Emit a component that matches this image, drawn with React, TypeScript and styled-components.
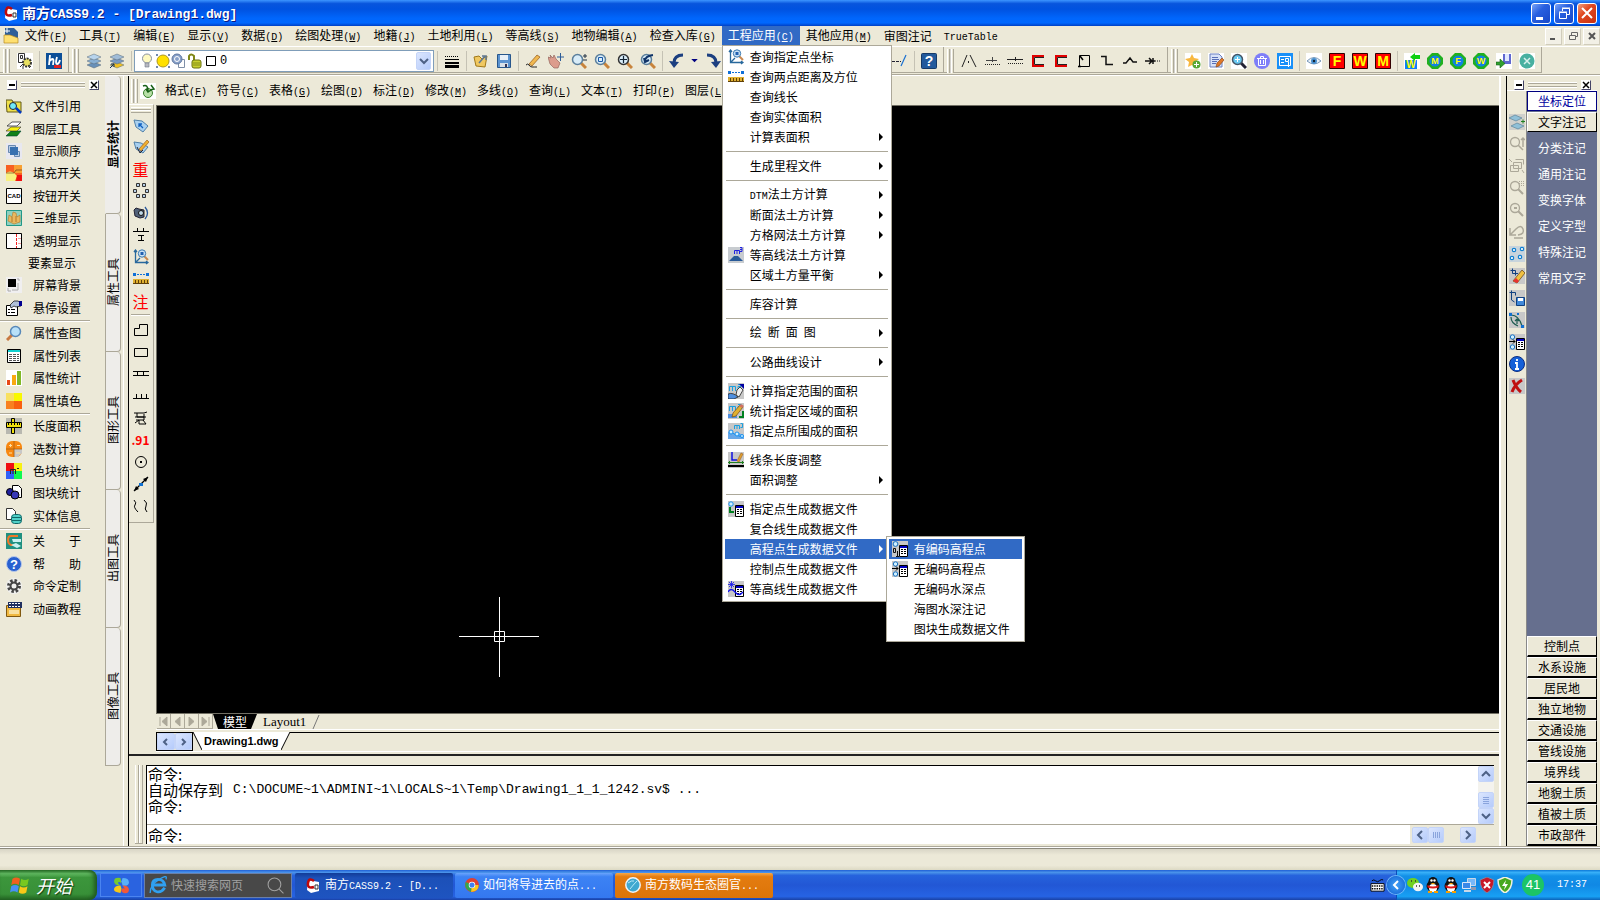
import React from 'react';
import styled, { createGlobalStyle, css } from 'styled-components';

const FACE = '#ece9d8';
const SHADOW = '#aca899';
const SELECT = '#316ac5';
const NAVY = '#000080';
const CJK = `'Noto Sans CJK SC', sans-serif`;
const MONO = `'Liberation Mono', 'Noto Sans CJK SC', monospace`;

const mag = (lens = '#b9dcf5', ring = '#5b7f9c', handle = '#c8843c') => (
  <>
    <path d="M10 10l5 5" stroke={handle} strokeWidth="3" />
    <circle cx="6.5" cy="6.5" r="5" fill={lens} stroke={ring} strokeWidth="1.5" />
  </>
);

const grid = (
  <>
    <path d="M7.5 4.5h8v11h-8z" fill="#fff" stroke="#000" />
    <path d="M8 5h7v2H8z" fill="#0000c0" />
    <path d="M9 8.5h2M12 8.5h2M9 10.5h2M12 10.5h2M9 12.5h2M12 12.5h2" stroke="#000" />
  </>
);

const square2 = (
  <path d="M1.5 8V3.5h6V8M4.5 4v4M10 1.5h3v2h-3v2h4" fill="none" stroke="#1aa0e0" />
);

const pencil = (
  <>
    <path d="M4 14l1-4 7-8 3 2-7 9z" fill="#e0b030" stroke="#7a4a10" strokeWidth=".7" />
    <path d="M11 3l2-2 3 2-2 2z" fill="#d07060" />
  </>
);

const badge = (letter: string) => (
  <>
    <path d="M5 0h6l5 5v6l-5 5H5l-5-5V5z" fill="#20b020" />
    <circle cx="8" cy="8" r="5.5" fill="#1080e8" />
    <text x="8" y="11" fontSize="9" fontWeight="700" fill="#ff0" textAnchor="middle">{letter}</text>
  </>
);

const redBox = (letter: string) => (
  <>
    <path d="M.5.5h15v15H.5z" fill="#f00" stroke="#300" />
    <text x="8" y="13" fontSize="14" fontWeight="700" fill="#ff0" textAnchor="middle">{letter}</text>
  </>
);

const penguin = (
  <>
    <ellipse cx="8" cy="9" rx="6.5" ry="6" fill="#111" />
    <circle cx="8" cy="4.5" r="4.5" fill="#111" />
    <ellipse cx="8" cy="11" rx="4" ry="4" fill="#fff" />
    <path d="M2.5 8q5.5 3 11 0v2.5q-5.5 2-11 0z" fill="#e01818" />
    <circle cx="6.5" cy="3.5" r="1.2" fill="#fff" />
    <circle cx="9.5" cy="3.5" r="1.2" fill="#fff" />
    <path d="M5.5 6h5L8 7.5z" fill="#f8a000" />
    <path d="M3 15h4M9 15h4" stroke="#f8a000" strokeWidth="2" />
  </>
);

const layerStack = (a: string, b: string, c: string) => (
  <>
    <path d="M1 12l7-3 7 3-7 3z" fill={c} stroke="#567" strokeWidth=".5" />
    <path d="M1 8l7-3 7 3-7 3z" fill={b} stroke="#567" strokeWidth=".5" />
    <path d="M1 4l7-3 7 3-7 3z" fill={a} stroke="#567" strokeWidth=".5" />
  </>
);

const glyphs: Record<string, React.ReactNode> = {
  cass: (
    <>
      <path d="M3 3l11 2v9l-8 2-4-3z" fill="#fff" />
      <path d="M9 4Q4 0 3 6t6 4" fill="none" stroke="#c00808" strokeWidth="2.5" />
      <path d="M10 8h3v4h-3z" fill="none" stroke="#333" />
    </>
  ),
  dwg: (
    <>
      <path d="M2 0h9l4 4v10H2z" fill="#2f5f98" />
      <path d="M1 7h6l8 3v5H1z" fill="#ffe070" stroke="#b88a20" strokeWidth=".7" />
      <path d="M4 0v5M1 3h6" stroke="#fff" />
    </>
  ),
  draft: (
    <>
      <path d="M0 0h16v16H0z" fill="#fff" />
      <path d="M1.5.5h6v9h-6zM3.5 2.5h2v3h-2z" fill="none" stroke="#333" />
      <circle cx="10" cy="9.500" r="4" fill="#e8e060" stroke="#333" strokeWidth="2" strokeDasharray="2 1" />
      <path d="M3 14l3-3M12 15l2-2M6 13v3" stroke="#333" />
    </>
  ),
  hb: (
    <>
      <path d="M0 0h16v16H0z" fill="#0c4f98" />
      <path d="M4 2L3 12M3.500 8q4-4 4 0L7 12M11 4q-2 7 0 7t3-4" fill="none" stroke="#fff" strokeWidth="1.8" />
      <path d="M8 12h7v3H8z" fill="#e02020" />
    </>
  ),
  layersBlue: layerStack('#b8d4ec', '#88b0d4', '#6890b8'),
  layersGold: (
    <>
      {layerStack('#a0bcd8', '#7898c0', '#f0c020')}
      <path d="M1 15l4-4M2 11h3v3" stroke="#103060" fill="none" />
    </>
  ),
  bulb: (
    <>
      <circle cx="8" cy="5.5" r="4.5" fill="#fffac0" stroke="#8890a0" />
      <path d="M6 10h4v4H6z" fill="#b8b8c0" stroke="#707888" strokeWidth=".6" />
    </>
  ),
  sun: (
    <>
      <path d="M1 1h2v2H1zM13 1h2v2h-2zM1 13h2v2H1zM13 13h2v2h-2z" fill="#7088b0" />
      <circle cx="8" cy="8" r="6" fill="#ffe000" stroke="#b09820" />
    </>
  ),
  freeze: (
    <>
      <path d="M7.5 6.5h6v8h-6z" fill="#fff" stroke="#8090a8" />
      <circle cx="6" cy="6" r="5" fill="#88a0c8" stroke="#6078a0" />
      <circle cx="6" cy="6" r="2.5" fill="none" stroke="#fff" />
    </>
  ),
  lock: (
    <>
      <path d="M2 7V3q2-3 5 0v5" fill="none" stroke="#808818" strokeWidth="2" />
      <rect x="5" y="7" width="9" height="8" rx="2" fill="#c8d030" stroke="#687010" />
      <path d="M6 10h7M6 12h7" stroke="#687010" strokeWidth=".7" />
    </>
  ),
  swatch: <path d="M3.5 3.5h9v9h-9z" fill="#fff" stroke="#000" />,
  lines: (
    <>
      <path d="M1 3.5h14" stroke="#000" strokeDasharray="1 1" />
      <path d="M1 6.5h14" stroke="#000" />
      <path d="M1 10h14" stroke="#000" strokeWidth="2" />
      <path d="M1 13.5h14" stroke="#000" strokeWidth="3" />
    </>
  ),
  folder: (
    <>
      <path d="M1 4l5-1 3 3 5-3-2 11-9-1z" fill="#f0c860" stroke="#a07818" />
      <path d="M6 10l6-7M9 3h4v4" stroke="#607890" strokeWidth="1.5" fill="none" />
    </>
  ),
  save: (
    <>
      <path d="M1.5 1.5h13v13h-13z" fill="#5b93d0" stroke="#28578c" />
      <path d="M4 2h8v5H4z" fill="#e8f0f8" />
      <path d="M4 10h8v4H4z" fill="#d8e0e8" />
      <path d="M9 11h2v3H9z" fill="#335" />
    </>
  ),
  pen: (
    <>
      <path d="M4 11l8-9 3 2-8 9z" fill="#f0b850" stroke="#905818" strokeWidth=".7" />
      <path d="M1 12q2-2 3 0t3 2 5 0" stroke="#222" fill="none" />
    </>
  ),
  hand: (
    <>
      <path d="M0 4l3 1-1-3 3 3 1-3 2 4 4 4-2 5H6l-4-4z" fill="#dc9c8c" stroke="#885850" strokeWidth=".6" />
      <path d="M12.5 0v8M9 4h7" stroke="#2c5c98" />
    </>
  ),
  zoomPm: <>{mag('#d8ecf8')}<path d="M12 3h4M14 1v4M12 7h4" stroke="#234" /></>,
  zoomWin: <>{mag('#d8ecf8')}<path d="M4.5 4.5h4v4h-4z" fill="none" stroke="#1858a8" /></>,
  zoomExt: <>{mag('#d8ecf8', '#333')}<path d="M3 6.5h7M6.5 3v7" stroke="#123" strokeWidth="1.2" /></>,
  zoomPrev: <>{mag('#d8ecf8')}<path d="M5 8q0-5 8-6M4 5l1 4 4-2" stroke="#103468" strokeWidth="2" fill="none" /></>,
  undo: (
    <>
      <path d="M14 2Q5 2 5 10" fill="none" stroke="#1c3f80" strokeWidth="3" />
      <path d="M0 8l5 7 5-6z" fill="#1c3f80" />
    </>
  ),
  redo: (
    <>
      <path d="M2 2q9 0 9 8" fill="none" stroke="#1c3f80" strokeWidth="3" />
      <path d="M6 9l5 6 5-7z" fill="#1c3f80" />
    </>
  ),
  tri: <path d="M4 6h8l-4 4z" fill={NAVY} />,
  dashLine: (
    <>
      <path d="M0 8.5h9" stroke="#223" strokeDasharray="3 1" />
      <path d="M9 13l5-11" stroke="#1870d0" strokeWidth="1.2" />
    </>
  ),
  helpBox: (
    <>
      <rect x=".5" y=".5" width="15" height="15" rx="1" fill="#235a9c" stroke="#163a68" />
      <text x="8" y="13" fontSize="14" fontWeight="700" fill="#fff" textAnchor="middle">?</text>
    </>
  ),
  slope: <path d="M1 14L6 2M9 2l6 12M7.500 8v2" stroke="#222" fill="none" />,
  dots1: <><path d="M1 11.5h15" stroke="#222" strokeDasharray="1 1" /><path d="M2 7.5h11M8.5 4v5" stroke="#444" /></>,
  dots2: <><path d="M1 10.5h15" stroke="#222" strokeDasharray="1 1" /><path d="M0 6.5h16M8.5 4v4" stroke="#222" /></>,
  redC1: <><path d="M14 3H3v10h11" stroke="#e00000" strokeWidth="2" fill="none" /><path d="M14 4.5H4.500v7H14" stroke="#222" fill="none" /></>,
  redC2: <><path d="M14 3H3v10h11" stroke="#e00000" strokeWidth="2" fill="none" /><path d="M14 4.5H4.500v7H14" stroke="#222" fill="none" /></>,
  notch: <><path d="M3.5 2.5h10v11h-10z" stroke="#000" fill="none" /><path d="M4 3l3 4M2 13.500h3" stroke="#000" strokeWidth="1.5" /></>,
  step: <path d="M2 3.500h5v8h7" stroke="#111" strokeWidth="1.5" fill="none" />,
  peak: <path d="M1 10h3l4-5 3 4h4" stroke="#111" strokeWidth="1.4" fill="none" />,
  arrowDots: <><path d="M0 8h10M4 5l3 3-3 3M8 5v6" stroke="#111" strokeWidth="1.5" fill="none" /><path d="M10 8h6" stroke="#111" strokeDasharray="1 1" /></>,
  star: (
    <>
      <path d="M0 0h16v16H0z" fill="#fff" />
      <path d="M7 1l2 4 5 1-4 3 1 5-4-2-4 2 1-5-4-3 5-1z" fill="#f8b840" />
      <circle cx="11.500" cy="11.500" r="4" fill="#58a838" />
      <path d="M9 11.5h5M11.5 9v5" stroke="#fff" />
    </>
  ),
  note: (
    <>
      <path d="M0 0h16v16H0z" fill="#fff" />
      <path d="M2 1h9l3 3v10H2z" fill="#d8e2f8" stroke="#6a80c0" />
      <path d="M4 4.500h6M4 6.500h7M4 8.500h5M4 10.500h4" stroke="#5870b8" />
      <path d="M8 14l1-4 5-5 2 2-5 6z" fill="#e07828" stroke="#804010" strokeWidth=".6" />
    </>
  ),
  magPlus: <><path d="M0 0h16v16H0z" fill="#fff" />{mag('#68c8f0', '#456', '#223')}<path d="M4 6.5h5M6.5 4v5" stroke="#fff" /></>,
  trash: (
    <>
      <circle cx="8" cy="8" r="8" fill="#7e7ef8" />
      <path d="M3 5.500h10M6.500 5V3.500h3V5M4.500 6v6.500h7V6M6.500 7v4M9.500 7v4" fill="none" stroke="#fff" />
    </>
  ),
  form: (
    <>
      <path d="M0 0h16v16H0z" fill="#1890f8" />
      <path d="M2.5 3.5h11v9h-11zM4 6.500h3M4 9.500h3M8.500 5.500h3v3h-3zM11.500 9v5" fill="none" stroke="#fff" />
    </>
  ),
  eye: (
    <>
      <path d="M0 0h16v16H0z" fill="#fff" />
      <path d="M1 8q7-7 14 0-7 6-14 0z" fill="#e8f0f8" stroke="#7898b8" />
      <circle cx="8" cy="8" r="3" fill="#4890d0" />
      <circle cx="8" cy="8" r="1.2" fill="#123" />
    </>
  ),
  boxF: redBox('F'),
  boxW: redBox('W'),
  boxM: redBox('M'),
  wArrow: (
    <>
      <path d="M0 0h16v16H0z" fill="#fff" />
      <path d="M1 7h12v9H1z" fill="#1080f8" />
      <path d="M6 4l5-4v2h5v4h-5v2z" fill="#10d010" />
      <text x="7" y="15" fontSize="10" fontWeight="700" fill="#ff0" textAnchor="middle">W</text>
    </>
  ),
  badgeM: badge('M'),
  badgeF: badge('F'),
  badgeW: badge('W'),
  exportDoc: (
    <>
      <path d="M0 0h16v16H0z" fill="#fff" />
      <path d="M7 1h8v10H7z" fill="#6068d0" />
      <path d="M9 1h4v7H9z" fill="#e0e8ff" />
      <path d="M0 9h4V6l5 4.500L4 15v-3H0z" fill="#30a030" stroke="#186018" strokeWidth=".6" />
    </>
  ),
  toolsRound: <><path d="M0 0h16v16H0z" fill="#fff" /><circle cx="8" cy="8" r="7.500" fill="#48b0a0" /><path d="M5 5l6 6M11 5l-6 6" stroke="#d8f0ec" strokeWidth="1.5" /></>,
  refresh: (
    <>
      <path d="M0 0h16v16H0z" fill="#fff" />
      <circle cx="8" cy="10" r="4.5" fill="#b8e0a8" stroke="#38802c" />
      <path d="M3 3q5-2 5 5M6 6l2 3 3-2M11 2l3 4-4 1" fill="none" stroke="#186018" strokeWidth="1.5" />
    </>
  ),
  fileRef: (
    <>
      <path d="M0 2h6l1 2h8v10H1z" fill="#f0e048" stroke="#605818" />
      <circle cx="7" cy="8" r="3.5" fill="#70e8f8" stroke="#223" />
      <path d="M10 10l5 5" stroke="#0038c0" strokeWidth="2.5" />
    </>
  ),
  layers: (
    <>
      <path d="M0 15l5-5h10l-4 5z" fill="#108018" stroke="#043" strokeWidth=".6" />
      <path d="M0 10l5-4h10l-4 4z" fill="#f8f010" stroke="#333" strokeWidth=".6" />
      <path d="M1 5l5-4h9l-4 4z" fill="#fff" stroke="#333" strokeWidth=".8" />
    </>
  ),
  order: (
    <>
      <path d="M0 0h16v16H0z" fill="#e8e8f0" />
      <path d="M2.500 2.500h7v7h-7zM8.500 8.500h5v5h-5z" fill="#b8cce4" stroke="#6888b0" />
      <path d="M4 4h8v8H4z" fill="#3870b0" />
    </>
  ),
  fill: (
    <>
      <path d="M0 0h16v16H0z" fill="#f86020" />
      <path d="M8 0h8v8H8z" fill="#f8a030" />
      <path d="M0 8q4-3 8 0l3 3-2 5H0z" fill="#f8f080" />
      <path d="M11 10h5v6h-6z" fill="#f01010" />
      <path d="M0 8h8l2-3h6" stroke="#603010" fill="none" strokeWidth=".6" />
    </>
  ),
  cad: (
    <>
      <path d="M.5.5h15v15H.5z" fill="#fff" stroke="#000" />
      <text x="8" y="10" fontSize="6" fontWeight="700" fill="#000" textAnchor="middle">CAD</text>
    </>
  ),
  threeD: (
    <>
      <path d="M.5.5h15v15H.5z" fill="#90d0c0" stroke="#209888" />
      <path d="M2 11l1-6 3 2 1-5 3 1 1 4 3-2v7l-6 2z" fill="#e8b860" stroke="#b07828" strokeWidth=".6" />
      <path d="M6 7v5M10 6v6" stroke="#b07828" />
    </>
  ),
  transp: (
    <>
      <path d="M.5.5h15v15H.5z" fill="#fff" stroke="#000" />
      <path d="M10.5 1v14" stroke="#f02020" strokeDasharray="3 1" />
      <path d="M12 5.500h3M12 10.500h3" stroke="#f8a0a0" />
    </>
  ),
  screenBg: (
    <>
      <path d="M0 0h16v16H0z" fill="#f0eff0" />
      <path d="M2 2h8v8H2z" fill="#000" />
      <path d="M11 2h2v2M2 11v3h3M12 6v7H6" stroke="#aaa" fill="none" />
    </>
  ),
  hover: (
    <>
      <path d="M.5 5.5h11v10H.5z" fill="#fff" stroke="#000" />
      <path d="M2 9.500h2M5 9.500h4M2 12.500h2M5 12.500h4" stroke="#000" />
      <path d="M4 5l4-4h4l3 2v3l-5 1-2-1-3 2z" fill="#b0c0d8" stroke="#000" strokeWidth=".7" />
      <path d="M13 1h3v5h-3z" fill="#000090" />
    </>
  ),
  magLeft: <g transform="matrix(-1 0 0 1 16 0)">{mag('#b8e0f8', '#5888b8', '#c87840')}</g>,
  list: (
    <>
      <path d="M1.5 1.5h13v13h-13z" fill="#fff" stroke="#000" />
      <path d="M2 2h12v2H2z" fill="#10d0d0" />
      <path d="M3 6.5h3M7 6.5h3M11 6.5h2M3 8.5h3M7 8.5h3M11 8.5h2M3 10.5h3M7 10.5h3M11 10.5h2M3 12.5h3M7 12.5h3M11 12.5h2" stroke="#555" />
    </>
  ),
  bars: (
    <>
      <path d="M0 0h16v16H0z" fill="#fff" />
      <path d="M1 10h3v5H1z" fill="#e84818" />
      <path d="M6 5h4v10H6z" fill="#f8a810" />
      <path d="M11 1h4v14h-4z" fill="#80b828" />
    </>
  ),
  color4: (
    <>
      <path d="M0 0h8v8H0z" fill="#f8e060" />
      <path d="M8 0h8v8H8z" fill="#f8f800" />
      <path d="M0 8h8v8H0z" fill="#f88020" />
      <path d="M8 8h8v8H8z" fill="#f86010" />
    </>
  ),
  ruler: (
    <>
      <path d="M0 0h16v16H0z" fill="#b8b8b0" />
      <path d="M5.500.5h3v15h-3z" fill="#f0e010" stroke="#000" />
      <path d="M.5 4.500h15v5H.5z" fill="#f0e010" stroke="#000" />
      <path d="M2.500 5v2M5.500 5v2M8.500 5v2M11.500 5v2M13.500 5v2" stroke="#000" />
    </>
  ),
  calc: (
    <>
      <rect x="0" y="0" width="16" height="16" rx="6" fill="#f88810" />
      <path d="M8 8h8v4l-4 4H8z" fill="#c8c8c8" />
      <path d="M8 0v16M0 8h16" stroke="#a86010" strokeWidth=".8" />
      <path d="M3 4.5h3M4.5 3v3M11 4.500h3M3 12h3M10 12h4" stroke="#fce0a0" />
    </>
  ),
  blocks: (
    <>
      <path d="M0 0h8v8H0z" fill="#f01010" />
      <path d="M8 0h8v8H8z" fill="#f8f010" />
      <path d="M0 8h8v8H0z" fill="#3060f8" />
      <path d="M8 8h8v8H8z" fill="#10f850" />
      <path d="M4.500 11V6.500h5V11M7 7v4M11 5.500h2" fill="none" stroke="#222" />
    </>
  ),
  plots: (
    <>
      <path d="M6.5.5h6l3 3v9h-9z" fill="#fff" stroke="#000" />
      <circle cx="4" cy="7" r="3.5" fill="#2020a0" stroke="#000" />
      <circle cx="9" cy="10" r="4" fill="#3838b8" stroke="#000" />
    </>
  ),
  entity: (
    <>
      <path d="M.5.5h6l3 3v8h-9z" fill="#fff" stroke="#333" />
      <rect x="5.500" y="6.500" width="10" height="9" rx="3" fill="#50d0c8" stroke="#106868" />
      <path d="M6 9.500h9M6 12.500h9" stroke="#106868" />
    </>
  ),
  about: (
    <>
      <path d="M0 0h16v16H0z" fill="#209080" />
      <path d="M12 3H5Q2 3 2 7t3 5h4" fill="none" stroke="#f07828" strokeWidth="2" />
      <path d="M6 6h9v3H7zM5 12l5-2 5 3-4 2z" fill="#c8f0f0" />
    </>
  ),
  helpRound: (
    <>
      <circle cx="8" cy="8" r="7.5" fill="#2860d0" stroke="#b8c8e8" />
      <text x="8" y="13" fontSize="13" fontWeight="700" fill="#fff" textAnchor="middle">?</text>
    </>
  ),
  gear: (
    <>
      <circle cx="8" cy="8" r="8" fill="#f0f0ee" />
      <circle cx="8" cy="8" r="5" fill="none" stroke="#444" strokeWidth="4" strokeDasharray="2.2 1.7" />
      <circle cx="8" cy="8" r="3.5" fill="none" stroke="#444" strokeWidth="2" />
    </>
  ),
  film: (
    <>
      <path d="M.5 4.500h14v11H.5z" fill="#f0b840" stroke="#805810" />
      <path d="M2 1h14v6H2z" fill="#203060" />
      <path d="M3 2.5h12M3 5.500h12" stroke="#fff" strokeDasharray="2 1" />
      <path d="M3 9h10v4H3z" fill="#f8e0a0" />
    </>
  ),
  tag: (
    <>
      <path d="M1 3l8 1 6 5-5 6-7-5z" fill="#a8d0f0" stroke="#5080a8" />
      <path d="M6 7l4 4M6 10V7h3" stroke="#1060c0" fill="none" strokeWidth="1.3" />
    </>
  ),
  tagEdit: (
    <>
      <path d="M1 3l7 1 7 4-5 6-7-4z" fill="#a8d0f0" stroke="#5080a8" />
      <path d="M6 10l8-9 2 2-8 9z" fill="#f0b030" stroke="#905010" strokeWidth=".6" />
      <path d="M4 8l3 6 3-3" stroke="#223" fill="none" />
    </>
  ),
  squares: (
    <path
      d="M3.500.500h3v3h-3zM9.500.500h3v3h-3zM.500 6.500h3v3h-3zM12.500 6.500h3v3h-3zM3.500 11.500h3v3h-3zM9.500 11.500h3v3h-3z"
      fill="#b8d0e8"
      stroke="#333"
    />
  ),
  camera: (
    <>
      <path d="M1 5l2-2 3 1 5 1v7L7 13l-5-2z" fill="#506078" stroke="#223" />
      <circle cx="8" cy="8" r="2.5" fill="#c0d8e8" stroke="#111" />
      <path d="M12 2q5 6 0 12" stroke="#28589c" fill="none" strokeWidth="1.3" />
    </>
  ),
  joint: <path d="M0 4.5h16M4.5 1v3M10.5 1v3M5 8.5h6M5 13.5h6M8.500 9v5" stroke="#000" fill="none" />,
  coordQuery: (
    <>
      <path d="M2.5 1v12.5H15M1 3l1.5-2L4 3M13 12l2 1.5-2 1.5M3 13l4-4" stroke="#28689c" strokeWidth="1.3" fill="none" />
      <path d="M11 7l4 4" stroke="#c88850" strokeWidth="2" />
      <circle cx="9" cy="4.5" r="3.7" fill="#c8e0f4" stroke="#3878b0" />
      <path d="M7.5 3h3v3h-3z" fill="#2060b0" />
    </>
  ),
  distance: (
    <>
      <path d="M0 2h3v3H0zM13 2h3v3h-3z" fill="#1070d8" />
      <path d="M4 3.5h9" stroke="#1070d8" strokeDasharray="2 1" />
      <path d="M0 8h16v5H0z" fill="#e0b030" />
      <path d="M0 12.500h16M2.5 9v3M5.5 9v3M8.5 9v3M11.5 9v3M14.5 9v3" stroke="#604008" />
    </>
  ),
  polygon: <path d="M1.5 6.5h5v-4h8v11h-13z" fill="none" stroke="#000" />,
  rect: <path d="M1.5 4.5h13v8h-13z" fill="none" stroke="#000" />,
  ladder: <path d="M0 5.5h16M0 9.5h16M4.5 5v4M10.5 5v4" stroke="#000" fill="none" />,
  comb: <path d="M0 10.5h16M3.5 6v4M8.5 6v4M13.5 6v4" stroke="#000" fill="none" />,
  brush: <path d="M1 3h10l3-1M4 3v4h7V4M2 7h11M3 10h8V7M2 13l4-3M10 10l3 4M6 10v4h7" stroke="#000" fill="none" />,
  circleDot: <><circle cx="8" cy="8" r="5.5" fill="none" stroke="#000" /><path d="M7 7h2v2H7z" /></>,
  arrow2: <><path d="M1 15L15 1" stroke="#000" strokeWidth="1.2" /><path d="M15 1l-2 5-3-3zM1 15l2-5 3 3z" /><path d="M6 7h4v3H6z" fill="#1070d0" /></>,
  waves: <path d="M1 2q3 3 1 5t3 7M11 2q4 3 2 6t1 6" stroke="#000" fill="none" />,
  volume: (
    <>
      <path d="M0 0h16v16H0z" fill="#c8ccd0" />
      <path d="M6.500 7V3.500h5V7M9 4v3M12 .5h2v4h-2M12 2.500h2" stroke="#2020e0" fill="none" />
      <path d="M1 14l5-5h4l5 5z" fill="#285a98" />
    </>
  ),
  area1: (
    <>
      <path d="M0 0h16v16H0z" fill="#c8c8c8" />
      {square2}
      <path d="M0 11q5-2 10 3l-4 2H0z" fill="#5090e0" stroke="#111" strokeWidth=".7" />
      <path d="M8 12l1-5 3-3 3 3-4 7z" fill="#f0f0f0" stroke="#222" strokeWidth=".8" />
      <path d="M11 1h5v5z" fill="#0000a0" />
    </>
  ),
  area2: (
    <>
      <path d="M0 0h16v16H0z" fill="#c8c8c8" />
      {square2}
      <path d="M0 11h9v4H0z" fill="#5090e0" />
      {pencil}
      <path d="M15 8v6h-4" stroke="#008020" strokeWidth="2" fill="none" />
    </>
  ),
  area3: (
    <>
      <path d="M0 0h16v16H0z" fill="#c8c8c8" />
      <path d="M6.500 6V2.500h5V6M9 3v3M12.500.5h2v4h-2" fill="none" stroke="#1aa0e0" />
      <path d="M0 9l6 2 5-1 5 3v3H0z" fill="#68a8e8" />
      <path d="M3 9l5 3 6 2" stroke="#1890f0" fill="none" />
      <circle cx="3" cy="9" r="2" fill="#d0f0ff" stroke="#1890f0" />
      <circle cx="9" cy="11" r="2" fill="#d0f0ff" stroke="#1890f0" />
      <circle cx="14" cy="13" r="1.500" fill="#d0f0ff" stroke="#1890f0" />
    </>
  ),
  lineLen: (
    <>
      <path d="M0 0h16v16H0z" fill="#c8c8c8" />
      <path d="M4 0v8h5" stroke="#1010e0" strokeWidth="1.5" fill="none" />
      <path d="M9 9l4-8 2 1-4 8z" fill="#e0a030" stroke="#905010" strokeWidth=".5" />
      <path d="M0 10.5h16M2 9L.5 10.500 2 12M14 9l1.500 1.500L14 12" stroke="#208020" fill="none" />
      <path d="M0 13h16v2H0z" fill="#000" />
    </>
  ),
  ptData: (
    <>
      <path d="M0 0h16v16H0z" fill="#c8c8c8" />
      <circle cx="3" cy="3" r="2.2" fill="#d0f0ff" stroke="#1890f0" />
      <path d="M2 6v5h4" stroke="#008020" strokeWidth="2" fill="none" />
      {grid}
    </>
  ),
  contour: (
    <>
      <path d="M0 0h16v16H0z" fill="#c8c8c8" />
      {grid}
      <path d="M3.500 0v7M0 3.5h7M1 1l5 5M6 1L1 6" stroke="#1010f0" strokeWidth=".8" />
      <path d="M0 11q3-5 7 0t8 0" fill="none" stroke="#1010f0" strokeWidth="1.3" />
    </>
  ),
  code1: (
    <>
      <path d="M0 0h16v16H0z" fill="#c8c8c8" />
      <circle cx="3.5" cy="3" r="2.4" fill="#d0f0ff" stroke="#1870c0" />
      <path d="M1.500 7.500h2v4h-2zM5.500 10v5M4 15.500h3" stroke="#111" fill="none" />
      {grid}
    </>
  ),
  code2: (
    <>
      <path d="M0 0h16v16H0z" fill="#c8c8c8" />
      <circle cx="3.5" cy="3" r="2.2" fill="#d0f0ff" stroke="#1870c0" />
      <circle cx="3.5" cy="13" r="2.2" fill="#d0f0ff" stroke="#1870c0" />
      <path d="M0 7.500h6M4 5.500l2 2-2 2" stroke="#000" fill="none" />
      {grid}
    </>
  ),
  layerPair: (
    <>
      <path d="M0 0h16v16H0z" fill="#d0d0cc" />
      <path d="M0 4l6-3 7 3-6 3zM2 12l6-3 7 3-6 3z" fill="#90c0d8" stroke="#507890" strokeWidth=".6" />
      <path d="M12 7.500h4M14 5.500v4" stroke="#208020" />
    </>
  ),
  gMag1: <><circle cx="6" cy="6" r="4.5" fill="none" stroke={SHADOW} strokeWidth="1.3" /><path d="M9 9l5 5M14 2v9M12 4l2-2 2 2" stroke={SHADOW} fill="none" strokeWidth="1.5" /></>,
  gDocs: <path d="M6.500 1.500h8v5M4.500 4.500h8v6h-8zM1.500 7.500h8v6h-8zM0 1l3 3M13 12l2 3" stroke={SHADOW} fill="none" />,
  gMag2: <><circle cx="6" cy="6" r="4.5" fill="none" stroke={SHADOW} strokeWidth="1.3" /><path d="M9 9l5 5" stroke={SHADOW} strokeWidth="2" /><path d="M10 1.500h6M10 3.500h6M10 5.500h6" stroke={SHADOW} strokeDasharray="1 1" /></>,
  gMag3: <><circle cx="6" cy="6" r="4.5" fill="none" stroke={SHADOW} strokeWidth="1.3" /><path d="M9 9l5 5M5 6h3" stroke={SHADOW} strokeWidth="2" /></>,
  gUndo: <path d="M1 4v7h6M1 11l6-6q5-5 7 0t-5 6M5 14h9" stroke={SHADOW} fill="none" strokeWidth="1.5" />,
  points: (
    <>
      <path d="M0 0h16v16H0z" fill="#c8d4dc" />
      <g fill="#fff" stroke="#1080d0" strokeWidth="1.2">
        <circle cx="5" cy="4" r="1.7" /><circle cx="13" cy="3" r="1.7" />
        <circle cx="3" cy="12" r="1.7" /><circle cx="11" cy="11" r="1.7" />
      </g>
    </>
  ),
  eraser: (
    <>
      <path d="M0 0h16v16H0z" fill="#c8c8c8" />
      <path d="M1.500 2.500h5v5M3.500.500v5H9" stroke="#104080" fill="none" />
      <path d="M4 13L13 2l3 3-8 10z" fill="#f0c040" stroke="#604010" strokeWidth=".7" />
      <path d="M4 13l3-3 3 3-2 2z" fill="#e83030" />
    </>
  ),
  saveTo: (
    <>
      <path d="M0 0h16v16H0z" fill="#c8c8c8" />
      <path d="M.5 2.500h6v3M2.500.500V10l3 2" stroke="#104080" fill="none" />
      <path d="M7.500 7.500h8v8h-8z" fill="#4088d8" stroke="#104080" />
      <path d="M9 8h5v3H9z" fill="#fff" />
    </>
  ),
  curve: (
    <>
      <path d="M0 0h16v16H0z" fill="#c8c8c8" />
      <path d="M2 3q8 0 11 11M2 5q0 6 7 9M8 12V7M6 9l2-2 2 2" stroke="#1d5c50" fill="none" strokeWidth="1.2" />
      <path d="M0 1h3v3H0zM12 13h3v3h-3zM8 1h2v2H8z" fill="#1070d0" />
    </>
  ),
  info: (
    <>
      <circle cx="8" cy="8" r="7.5" fill="#1560d8" stroke="#0a2c80" />
      <path d="M8 3v2M6 7h2v6M6 13h4" stroke="#fff" strokeWidth="1.8" fill="none" />
    </>
  ),
  redX: (
    <>
      <path d="M0 0h16v16H0z" fill="#c8c8c8" />
      <path d="M4 2q3 8 8 12M13 2Q6 6 3 14" stroke="#c01010" strokeWidth="3" fill="none" />
    </>
  ),
  xpFlag: (
    <>
      <path d="M2 3q3-2 6 0L7 8Q4 6 1 8z" fill="#f06020" />
      <path d="M9 3q3 2 6 0l-1 5q-3 2-6 0z" fill="#78c820" />
      <path d="M1 9q3-2 6 0l-1 5q-3-2-6 0z" fill="#4890f8" />
      <path d="M8 9q3 2 6 0l-1 5q-3 2-6 0z" fill="#f8c818" />
    </>
  ),
  swirl: (
    <>
      <path d="M7 1Q1 0 1 4t6 4q-3-2-2-3t3 1z" fill="#78c830" />
      <path d="M9 1q6 0 6 4t-6 3l-1-4z" fill="#58b0f8" />
      <path d="M7 8q-5 0-6 3t6 4l1-4z" fill="#f8c818" />
      <path d="M9 8q6 0 6 4t-5 3q-3-1-2-3t3-1z" fill="#f05838" />
    </>
  ),
  ie: (
    <>
      <path d="M14 10.5Q11 15 7 14T3 8q0-5 5-5t6 5H4" fill="none" stroke="#30a0f0" strokeWidth="2.5" />
      <path d="M1 15Q1 8 9 3t6 0" fill="none" stroke="#30a0f0" strokeWidth="1.2" />
    </>
  ),
  search: <><circle cx="7" cy="7" r="6" fill="none" stroke="#a0a0a0" /><path d="M11.5 11.5l4 4" stroke="#a0a0a0" /></>,
  chrome: (
    <>
      <circle cx="8" cy="8" r="8" fill="#e04030" />
      <path d="M8 8L1 4.500Q-2 12 7 16z" fill="#30a850" />
      <path d="M8 8h7.500Q16 15 7 16z" fill="#f8c820" />
      <circle cx="8" cy="8" r="3.7" fill="#fff" />
      <circle cx="8" cy="8" r="2.9" fill="#4080f0" />
    </>
  ),
  globe: (
    <>
      <circle cx="8" cy="8" r="7.2" fill="#40a8d0" stroke="#f0f4f8" strokeWidth="1.5" />
      <path d="M5 12q3-4 7-8M3 6q4-3 6-2" stroke="#b8e8f8" fill="none" />
    </>
  ),
  keyboard: (
    <>
      <path d="M2 3q2-2 4 0t4 0 4-1" fill="none" stroke="#000" />
      <path d="M1 6h14v8H1z" fill="#fff" stroke="#000" />
      <path d="M2 8.5h12M2 11.5h12" stroke="#000" strokeWidth="1.5" strokeDasharray="1.5 1" />
    </>
  ),
  wechat: (
    <>
      <ellipse cx="6" cy="6" rx="6" ry="5" fill="#70d020" />
      <ellipse cx="11" cy="10" rx="5" ry="4.200" fill="#f4f4f4" />
      <path d="M4 4h1M8 4h1M9 9h1M12 9h1" stroke="#333" strokeWidth="1.5" />
    </>
  ),
  penguin,
  network: (
    <>
      <path d="M6.5 1.5h8v7h-8z" fill="#78b8f8" stroke="#c8d8e8" />
      <path d="M10 10h5v3h-5z" fill="#9098b0" />
      <path d="M1.5 5.5h8v6h-8z" fill="#3888e8" stroke="#d8e8f8" />
      <path d="M3 14h7" stroke="#c8d8e8" strokeWidth="2" />
    </>
  ),
  shieldRed: <><path d="M8 0l7 3q0 9-7 13Q1 12 1 3z" fill="#c81828" stroke="#7888a8" /><path d="M5 5l6 6M11 5l-6 6" stroke="#fff" strokeWidth="2" /></>,
  shieldGreen: <><path d="M8 0l7 3q0 9-7 13Q1 12 1 3z" fill="#48a820" stroke="#f0f0e0" strokeWidth="1.5" /><path d="M9 3L5 9h3l-1 4 4-6H8z" fill="#fff" /></>,
};

const Icon = ({ name, size = 16 }: { name: string; size?: number }) => (
  <Svg width={size} height={size} viewBox="0 0 16 16" aria-hidden="true">
    {glyphs[name]}
  </Svg>
);

// Latin runs sit on a half-width grid next to the full-width characters.
const Label = ({ text, hotkey }: { text: string; hotkey?: string }) => (
  <span>
    {text.split(/([\x20-\x7e]+)/).map((part, i) => (i % 2 ? <Latin key={i}>{part}</Latin> : part))}
    {hotkey && (
      <Latin>
        (<u>{hotkey}</u>)
      </Latin>
    )}
  </span>
);

const menuBar: [string, string?][] = [
  ['文件', 'F'], ['工具', 'T'], ['编辑', 'E'], ['显示', 'V'], ['数据', 'D'],
  ['绘图处理', 'W'], ['地籍', 'J'], ['土地利用', 'L'], ['等高线', 'S'],
  ['地物编辑', 'A'], ['检查入库', 'G'], ['工程应用', 'C'], ['其他应用', 'M'],
  ['审图注记'], ['TrueTable'],
];

const subBar: [string, string][] = [
  ['格式', 'F'], ['符号', 'C'], ['表格', 'G'], ['绘图', 'D'], ['标注', 'D'], ['修改', 'M'],
  ['多线', 'O'], ['查询', 'L'], ['文本', 'T'], ['打印', 'P'], ['图层', 'L'],
];

type Entry = { text: string; icon?: string; more?: boolean; open?: boolean };

const menuGroups: Entry[][] = [
  [
    { text: '查询指定点坐标', icon: 'coordQuery' },
    { text: '查询两点距离及方位', icon: 'distance' },
    { text: '查询线长' },
    { text: '查询实体面积' },
    { text: '计算表面积', more: true },
  ],
  [{ text: '生成里程文件', more: true }],
  [
    { text: 'DTM法土方计算', more: true },
    { text: '断面法土方计算', more: true },
    { text: '方格网法土方计算', more: true },
    { text: '等高线法土方计算', icon: 'volume' },
    { text: '区域土方量平衡', more: true },
  ],
  [{ text: '库容计算' }],
  [{ text: '绘 断 面 图', more: true }],
  [{ text: '公路曲线设计', more: true }],
  [
    { text: '计算指定范围的面积', icon: 'area1' },
    { text: '统计指定区域的面积', icon: 'area2' },
    { text: '指定点所围成的面积', icon: 'area3' },
  ],
  [
    { text: '线条长度调整', icon: 'lineLen' },
    { text: '面积调整', more: true },
  ],
  [
    { text: '指定点生成数据文件', icon: 'ptData' },
    { text: '复合线生成数据文件' },
    { text: '高程点生成数据文件', more: true, open: true },
    { text: '控制点生成数据文件' },
    { text: '等高线生成数据文件', icon: 'contour' },
  ],
];

const subMenu: Entry[] = [
  { text: '有编码高程点', icon: 'code1', open: true },
  { text: '无编码高程点', icon: 'code2' },
  { text: '无编码水深点' },
  { text: '海图水深注记' },
  { text: '图块生成数据文件' },
];

const sideGroups: { height: number; items: [string, string?][] }[] = [
  {
    height: 224,
    items: [
      ['文件引用', 'fileRef'], ['图层工具', 'layers'], ['显示顺序', 'order'], ['填充开关', 'fill'],
      ['按钮开关', 'cad'], ['三维显示', 'threeD'], ['透明显示', 'transp'], ['要素显示'],
      ['屏幕背景', 'screenBg'], ['悬停设置', 'hover'],
    ],
  },
  { height: 90, items: [['属性查图', 'magLeft'], ['属性列表', 'list'], ['属性统计', 'bars'], ['属性填色', 'color4']] },
  {
    height: 112,
    items: [['长度面积', 'ruler'], ['选数计算', 'calc'], ['色块统计', 'blocks'], ['图块统计', 'plots'], ['实体信息', 'entity']],
  },
  { height: 90, items: [['关　　于', 'about'], ['帮　　助', 'helpRound'], ['命令定制', 'gear'], ['动画教程', 'film']] },
];

const sideTabs = ['显示统计', '属性工具', '图形工具', '出图工具', '图像工具'];

const drawTools = ['tag', 'tagEdit', '重', 'squares', 'camera', 'joint', 'coordQuery', 'distance', '注', '|',
  'polygon', 'rect', 'ladder', 'comb', 'brush', '.91', 'circleDot', 'arrow2', 'waves'];

const dockTools = ['layerPair', 'gMag1', 'gDocs', 'gMag2', 'gMag3', 'gUndo', 'points', 'eraser', 'saveTo',
  'curve', 'code2', 'info', 'redX'];

const annotations = ['分类注记', '通用注记', '变换字体', '定义字型', '特殊注记', '常用文字'];
const categories = ['控制点', '水系设施', '居民地', '独立地物', '交通设施', '管线设施', '境界线', '地貌土质', '植被土质', '市政部件'];

const Tools = ({ names }: { names: string[] }) => (
  <>
    {names.map((name, i) =>
      name === '|' ? (
        <Divider key={i} />
      ) : (
        <ToolButton key={i} aria-label={name}>
          <Icon name={name} />
        </ToolButton>
      )
    )}
  </>
);

const MenuRow = ({ entry, children }: { entry: Entry; children?: React.ReactNode }) => (
  <MenuItem>
    <MenuButton $active={entry.open}>
      <IconSlot>{entry.icon && <Icon name={entry.icon} />}</IconSlot>
      <Label text={entry.text} />
      {entry.more && <More />}
    </MenuButton>
    {children}
  </MenuItem>
);

const EngineeringMenu = () => (
  <Popup>
    {menuGroups.map((group, i) => (
      <React.Fragment key={i}>
        {i > 0 && <MenuRule />}
        {group.map((entry) => (
          <MenuRow key={entry.text} entry={entry}>
            {entry.open && (
              <SubPopup>
                {subMenu.map((sub) => (
                  <MenuRow key={sub.text} entry={sub} />
                ))}
              </SubPopup>
            )}
          </MenuRow>
        ))}
      </React.Fragment>
    ))}
  </Popup>
);

const DockHeader = () => (
  <DockHead>
    <TinyButton aria-label="minimize">
      <svg width="8" height="8"><path d="M1 4h6" stroke="#000" strokeWidth="2" /></svg>
    </TinyButton>
    <DockGrip />
    <TinyButton aria-label="close">
      <svg width="8" height="8"><path d="M1 1l6 6M7 1L1 7" stroke="#000" strokeWidth="1.5" /></svg>
    </TinyButton>
  </DockHead>
);

const Chevron = ({ d, thin }: { d: string; thin?: boolean }) => (
  <svg width="10" height="10" viewBox="0 0 10 10">
    <path d={d} fill="none" stroke={thin ? '#8aa4dc' : '#4d6185'} strokeWidth={thin ? 1 : 2} />
  </svg>
);

const LeftDock = () => (
  <LeftPanel>
    <LeftMain>
      <DockHeader />
      {sideGroups.map((group, i) => (
        <SideGroup key={i} $height={group.height} $ruled={i > 0}>
          {group.items.map(([text, icon]) => (
            <SideButton key={text} $plain={!icon}>
              {icon && <Icon name={icon} />}
              {text}
            </SideButton>
          ))}
        </SideGroup>
      ))}
    </LeftMain>
    <SideTabs>
      {sideTabs.map((tab, i) => (
        <SideTab key={tab} $active={i === 0}>
          <span>{tab}</span>
        </SideTab>
      ))}
    </SideTabs>
  </LeftPanel>
);

const Workspace = () => (
  <Center>
    <SubBar>
      <Grip $tight />
      <Icon name="refresh" />
      <SubMenus>
        {subBar.map(([text, key]) => (
          <FlatButton key={text}>
            <Label text={text} hotkey={key} />
          </FlatButton>
        ))}
      </SubMenus>
    </SubBar>
    <Stage>
      <DrawBar>
        <FlatGrip />
        {drawTools.map((name) =>
          name === '|' ? (
            <DrawRule key={name} />
          ) : (
            <DrawButton key={name} aria-label={name}>
              {glyphs[name] ? <Icon name={name} /> : <RedText $small={name === '.91'}>{name}</RedText>}
            </DrawButton>
          )
        )}
      </DrawBar>
      <Sheets>
        <Canvas>
          <Crosshair width="80" height="80" viewBox="0 0 80 80">
            <path d="M0 39.5h80M40.5 0v80M35.5 34.5h10v10h-10z" fill="none" stroke="#fff" />
          </Crosshair>
        </Canvas>
        <LayoutTabs>
          {['M2 1v9M9 1v9L4 5.5z', 'M8 1v9L3 5.5z', 'M3 1v9l5-4.5z', 'M9 1v9M2 1v9l5-4.5z'].map((d) => (
            <NavButton key={d} aria-label="sheet">
              <svg width="11" height="11"><path d={d} fill={SHADOW} stroke={SHADOW} /></svg>
            </NavButton>
          ))}
          <LayoutTab $active>模型</LayoutTab>
          <LayoutTab>
            Layout1
            <svg width="8" height="14"><path d="M1 14L7 0" stroke="#777" /></svg>
          </LayoutTab>
        </LayoutTabs>
        <FileTabs>
          <FileNav>
            <ScrollButton aria-label="previous"><Chevron d="M6 2L3 5l3 3" /></ScrollButton>
            <ScrollButton aria-label="next"><Chevron d="M4 2l3 3-3 3" /></ScrollButton>
          </FileNav>
          <svg width="9" height="18"><path d="M0 0h9v18z" fill="#fff" /><path d="M0 0l9 18" stroke="#000" /></svg>
          <FileTab>Drawing1.dwg</FileTab>
          <svg width="9" height="18"><path d="M0 0h9L0 18z" fill="#fff" /><path d="M9 0L0 18" stroke="#000" /></svg>
          <FileLine />
        </FileTabs>
      </Sheets>
    </Stage>
    <CommandPane>
      <TallGrip />
      <CommandBox>
        <History>
          <HistoryText>
            <HistoryLine>命令:</HistoryLine>
            <HistoryLine>
              自动保存到
              <Path>{'C:\\DOCUME~1\\ADMINI~1\\LOCALS~1\\Temp\\Drawing1_1_1_1242.sv$ ...'}</Path>
            </HistoryLine>
            <HistoryLine>命令:</HistoryLine>
          </HistoryText>
          <VScroll>
            <ScrollButton aria-label="up"><Chevron d="M1 7l4-4 4 4" /></ScrollButton>
            <Spacer />
            <ScrollButton aria-label="thumb"><Chevron thin d="M2 2.5h6M2 4.5h6M2 6.5h6M2 8.5h6" /></ScrollButton>
            <ScrollButton aria-label="down"><Chevron d="M1 3l4 4 4-4" /></ScrollButton>
          </VScroll>
        </History>
        <Prompt>
          <label htmlFor="command">命令:</label>
          <PromptInput id="command" />
          <HScroll>
            <ScrollButton aria-label="left"><Chevron d="M7 1L3 5l4 4" /></ScrollButton>
            <ScrollButton aria-label="thumb"><Chevron thin d="M2.5 2v6M4.5 2v6M6.5 2v6M8.5 2v6" /></ScrollButton>
            <Spacer />
            <ScrollButton aria-label="right"><Chevron d="M3 1l4 4-4 4" /></ScrollButton>
          </HScroll>
        </Prompt>
      </CommandBox>
    </CommandPane>
  </Center>
);

const RightDock = () => (
  <RightPanel>
    <DockHeader />
    <RightBody>
      <RightTools>
        {dockTools.map((name) => (
          <DrawButton key={name} aria-label={name}>
            <Icon name={name} />
          </DrawButton>
        ))}
      </RightTools>
      <Palette>
        <PaletteTop>坐标定位</PaletteTop>
        <PaletteHead>文字注记</PaletteHead>
        <PaletteList>
          {annotations.map((text) => (
            <PaletteLink key={text}>{text}</PaletteLink>
          ))}
        </PaletteList>
        {categories.map((text) => (
          <Category key={text}>{text}</Category>
        ))}
      </Palette>
    </RightBody>
  </RightPanel>
);

const TaskBar = () => (
  <Bar>
    <Start>
      <Icon name="xpFlag" size={20} />
      开始
    </Start>
    <Quick aria-label="quick launch">
      <Icon name="swirl" size={17} />
    </Quick>
    <SearchBox>
      <Icon name="ie" size={18} />
      <SearchInput placeholder="快速搜索网页" aria-label="快速搜索网页" />
      <Icon name="search" size={17} />
    </SearchBox>
    <Task $tone="pressed">
      <Icon name="cass" />
      <Label text="南方CASS9.2 - [D..." />
    </Task>
    <Task>
      <Icon name="chrome" size={14} />
      <Label text="如何将导进去的点..." />
    </Task>
    <Task $tone="alert">
      <Icon name="globe" />
      <Label text="南方数码生态圈官..." />
    </Task>
    <Spacer />
    <Keyboard>
      <Icon name="keyboard" size={15} />
    </Keyboard>
    <Tray>
      <Expand aria-label="show icons">
        <svg width="10" height="12"><path d="M7 2L3 6l4 4" fill="none" stroke="#fff" strokeWidth="2" /></svg>
      </Expand>
      {['wechat', 'penguin', 'penguin', 'network', 'shieldRed', 'shieldGreen'].map((name, i) => (
        <Icon key={i} name={name} />
      ))}
      <Score>41</Score>
      <Clock>17:37</Clock>
    </Tray>
  </Bar>
);

export default function App() {
  return (
    <Screen>
      <GlobalStyle />
      <TitleBar>
        <Icon name="cass" />
        <TitleText>
          南方<b>CASS9.2 - [Drawing1.dwg]</b>
        </TitleText>
        <WinButton aria-label="minimize">
          <svg width="19" height="19"><path d="M4 14.5h7" stroke="#fff" strokeWidth="3" /></svg>
        </WinButton>
        <WinButton aria-label="restore">
          <svg width="19" height="19"><path d="M4.5 8.5h7v6h-7zM4 8h8M7.5 7V4.5h7v6H12M7 4h8" fill="none" stroke="#fff" /></svg>
        </WinButton>
        <WinButton aria-label="close" $close>
          <svg width="19" height="19"><path d="M4 4l10 10M14 4L4 14" stroke="#fff" strokeWidth="2" /></svg>
        </WinButton>
      </TitleBar>
      <MenuBar>
        <Icon name="dwg" />
        {menuBar.map(([text, key]) => (
          <MenuSlot key={text}>
            <BarButton $open={text === '工程应用'}>
              <Label text={text} hotkey={key} />
            </BarButton>
            {text === '工程应用' && <EngineeringMenu />}
          </MenuSlot>
        ))}
        <Spacer />
        <MdiButton aria-label="minimize"><svg width="12" height="12"><path d="M2 9h5" stroke="#555" strokeWidth="2" /></svg></MdiButton>
        <MdiButton aria-label="restore"><svg width="12" height="12"><path d="M2.5 5.5h6v4h-6zM4.5 5V2.5h6v4H9" fill="none" stroke="#666" /></svg></MdiButton>
        <MdiButton aria-label="close"><svg width="12" height="12"><path d="M3 3l6 6M9 3L3 9" stroke="#555" strokeWidth="2" /></svg></MdiButton>
      </MenuBar>
      <ToolRow>
        <ToolGroup>
          <Grip />
          <Tools names={['draft', '|', 'hb']} />
        </ToolGroup>
        <ToolGroup>
          <Grip />
          <Tools names={['layersBlue', 'layersGold', '|']} />
          <LayerBox>
            {['bulb', 'sun', 'freeze', 'lock', 'swatch'].map((name) => (
              <Icon key={name} name={name} />
            ))}
            <LayerSelect aria-label="图层">
              <option>0</option>
            </LayerSelect>
            <Drop><Chevron d="M1 3l4 4 4-4" /></Drop>
          </LayerBox>
          <Tools
            names={['|', 'lines', '|', 'folder', 'save', '|', 'pen', 'hand', 'zoomPm', 'zoomWin', 'zoomExt', 'zoomPrev', '|', 'undo']}
          />
          <ToolButton $narrow aria-label="undo list"><Icon name="tri" size={13} /></ToolButton>
          <Tools names={['redo']} />
          <Hidden />
          <Tools names={['dashLine', '|', 'helpBox']} />
        </ToolGroup>
        <ToolGroup>
          <Grip />
          <Tools names={['slope', 'dots1', 'dots2', 'redC1', 'redC2', 'notch', 'step', 'peak', 'arrowDots']} />
        </ToolGroup>
        <ToolGroup>
          <Grip />
          <Tools
            names={['star', 'note', 'magPlus', 'trash', 'form', '|', 'eye', 'boxF', 'boxW', 'boxM', '|',
              'wArrow', 'badgeM', 'badgeF', 'badgeW', 'exportDoc', 'toolsRound']}
          />
        </ToolGroup>
      </ToolRow>
      <Body>
        <LeftDock />
        <Workspace />
        <RightDock />
      </Body>
      <Footer />
      <TaskBar />
    </Screen>
  );
}

const GlobalStyle = createGlobalStyle`
  * {
    box-sizing: border-box;
  }
  body {
    margin: 0;
    overflow: hidden;
  }
  button,
  input,
  select {
    margin: 0;
    padding: 0;
    border: 0;
    border-radius: 0;
    background: none;
    color: inherit;
    font: inherit;
    white-space: nowrap;
  }
`;

const Svg = styled.svg`
  flex: none;
  display: block;
  font-family: 'Liberation Sans', sans-serif;
`;

const Latin = styled.span`
  font-family: ${MONO};
  font-size: 10px;
  white-space: pre;
`;

const Screen = styled.div`
  display: flex;
  flex-direction: column;
  height: 100vh;
  background: ${FACE};
  color: #000;
  font: 12px/16px ${CJK};
`;

const Spacer = styled.span`
  flex: 1;
`;

const TitleBar = styled.header`
  flex: none;
  display: flex;
  align-items: center;
  gap: 3px;
  height: 26px;
  padding: 0 3px;
  background: linear-gradient(#3d95ff, #0855dd 14%, #0052e0 35%, #0066fc 70%, #0068ff 88%, #0040c4);
`;

const TitleText = styled.span`
  flex: 1;
  color: #fff;
  font: 700 14px/20px ${CJK};
  text-shadow: 1px 1px #0a1883;

  b {
    font: 700 13px/20px ${MONO};
    white-space: pre;
  }
`;

const WinButton = styled.button<{ $close?: boolean }>`
  width: 20px;
  height: 21px;
  border: 1px solid #fff;
  border-radius: 3px;
  overflow: hidden;
  background: ${({ $close }) =>
    $close ? 'linear-gradient(135deg, #f0a080, #e04820 40%, #c83010)' : 'linear-gradient(135deg, #7aa4f8, #2860e0 40%, #1848c8)'};

  svg {
    display: block;
  }
`;

const MenuBar = styled.nav`
  flex: none;
  display: flex;
  align-items: center;
  height: 20px;
  padding-left: 3px;
`;

const MenuSlot = styled.div`
  position: relative;
`;

const BarButton = styled.button<{ $open?: boolean }>`
  display: block;
  height: 20px;
  padding: 0 6px;
  ${({ $open }) => $open && css`
    background: ${SELECT};
    color: #fff;
  `}
`;

const MdiButton = styled.button`
  width: 17px;
  height: 17px;
  margin-left: 2px;
  background: #f2f0e6;
  border: 1px solid;
  border-color: #fff #d0ccbc #d0ccbc #fff;

  svg {
    display: block;
    margin: auto;
  }
`;

const popupFrame = css`
  position: absolute;
  z-index: 5;
  padding: 2px;
  background: #fff;
  border: 1px solid ${SHADOW};
`;

const Popup = styled.div`
  ${popupFrame}
  top: 19px;
  left: 0;
  width: 170px;
  padding-top: 1px;
`;

const SubPopup = styled.div`
  ${popupFrame}
  top: -3px;
  left: 161px;
  width: 139px;
`;

const MenuItem = styled.div`
  position: relative;
`;

const MenuButton = styled.button<{ $active?: boolean }>`
  display: flex;
  align-items: center;
  width: 100%;
  height: 20px;
  padding: 0 6px 0 3px;
  text-align: left;
  ${({ $active }) => $active && css`
    background: ${SELECT};
    color: #fff;
  `}
`;

const IconSlot = styled.span`
  flex: none;
  width: 22px;
`;

const More = styled.i`
  margin-left: auto;
  border: 4px solid transparent;
  border-left-color: currentColor;
  border-right-width: 0;
`;

const MenuRule = styled.hr`
  height: 1px;
  margin: 4px 1px;
  border: 0;
  background: ${SHADOW};
`;

const ToolRow = styled.div`
  flex: none;
  display: flex;
  height: 30px;
  padding-bottom: 2px;
  border-top: 1px solid #fff;
  border-bottom: 1px solid #fff;
  box-shadow: inset 0 -1px ${SHADOW};
`;

const ToolGroup = styled.div`
  display: flex;
  align-items: center;
  padding: 2px 3px 0 0;
  border-right: 1px solid ${SHADOW};
  border-bottom: 1px solid ${SHADOW};
`;

const Grip = styled.span<{ $tight?: boolean }>`
  flex: none;
  width: 7px;
  height: 24px;
  margin: 0 ${({ $tight }) => ($tight ? 2 : 3)}px;
  background: linear-gradient(90deg, #fff 1px, ${FACE} 1px 2px, ${SHADOW} 2px 3px, #fff 4px 5px, ${FACE} 5px 6px, ${SHADOW} 6px);
`;

const Divider = styled.span`
  width: 6px;
  height: 20px;
  background: linear-gradient(90deg, transparent 3px, #c5c2b4 3px 4px, transparent 4px);
`;

const ToolButton = styled.button<{ $narrow?: boolean }>`
  flex: none;
  display: grid;
  place-items: center;
  width: ${({ $narrow }) => ($narrow ? 13 : 23)}px;
  height: 22px;
`;

const Hidden = styled.span`
  width: 164px;
`;

const LayerBox = styled.div`
  display: flex;
  align-items: center;
  width: 300px;
  height: 22px;
  padding: 0 2px 0 4px;
  background: #fff;
  border: 1px solid #7f9db9;
`;

const LayerSelect = styled.select`
  flex: 1;
  height: 18px;
  padding-left: 1px;
  appearance: none;
  font-family: ${MONO};
`;

const scrollFace = css`
  display: grid;
  place-items: center;
  background: linear-gradient(135deg, #dbe6fe, #b5cbfb);
  border: 1px solid #c4d4f8;
  border-radius: 2px;
`;

const Drop = styled.span`
  ${scrollFace}
  width: 15px;
  height: 18px;
`;

const Body = styled.main`
  flex: 1;
  display: flex;
  min-height: 0;
`;

const LeftPanel = styled.aside`
  flex: none;
  display: flex;
  width: 129px;
  border-right: 1px solid #000;
  box-shadow: inset -4px 0 ${FACE}, inset -5px 0 #fff;
`;

const LeftMain = styled.div`
  width: 105px;
`;

const DockHead = styled.div`
  display: flex;
  align-items: center;
  gap: 4px;
  height: 14px;
  padding: 4px 6px 0 7px;
`;

const TinyButton = styled.button`
  width: 10px;
  height: 10px;
  background: #fff;
  border: 1px solid;
  border-color: #fff #446 #446 #fff;

  svg {
    display: block;
  }
`;

const DockGrip = styled.span`
  flex: 1;
  height: 6px;
  border: solid #fff;
  border-width: 1px 0;
  background: linear-gradient(${SHADOW} 1px, ${FACE} 1px 3px, ${SHADOW} 3px);
`;

const SideGroup = styled.div<{ $height: number; $ruled: boolean }>`
  display: grid;
  grid-auto-rows: 1fr;
  height: ${({ $height }) => $height}px;
  width: 90px;
  margin-top: 5px;
  ${({ $ruled }) => $ruled && css`
    margin-top: 3px;
    box-shadow: 0 -1px #fff, 0 -2px ${SHADOW};
  `}
`;

const SideButton = styled.button<{ $plain: boolean }>`
  display: flex;
  align-items: center;
  gap: 11px;
  padding-left: ${({ $plain }) => ($plain ? 28 : 6)}px;
`;

const SideTabs = styled.div`
  display: flex;
  flex-direction: column;
  width: 16px;
`;

const SideTab = styled.button<{ $active: boolean }>`
  display: grid;
  place-items: center;
  height: 138px;
  background: #eeedea;
  border: 1px solid ${SHADOW};
  border-width: 0 1px 1px;
  border-radius: 0 4px 4px 0;
  ${({ $active }) => $active && css`
    border-left-color: #eeedea;
    font-weight: 700;
  `}

  span {
    writing-mode: vertical-rl;
    text-orientation: sideways;
    transform: rotate(180deg);
    line-height: 14px;
  }
`;

const Center = styled.section`
  flex: 1;
  display: flex;
  flex-direction: column;
  min-width: 0;
  margin-right: 5px;
  border-right: 2px solid #fff;
`;

const SubBar = styled.div`
  flex: none;
  display: flex;
  align-items: center;
  height: 28px;
  padding-top: 2px;
`;

const SubMenus = styled.nav`
  display: flex;
  margin-left: 4px;
`;

const FlatButton = styled.button`
  width: 52px;
  text-align: center;
`;

const Stage = styled.div`
  flex: 1;
  display: flex;
  min-height: 0;
`;

const DrawBar = styled.div`
  flex: none;
  align-self: flex-start;
  display: flex;
  flex-direction: column;
  align-items: center;
  width: 25px;
  margin-right: 2px;
  padding: 2px 1px 5px 0;
  border: 1px solid ${SHADOW};
  border-left: 0;
  border-top-color: #fff;
`;

const FlatGrip = styled.span`
  width: 20px;
  height: 6px;
  margin-bottom: 1px;
  background: linear-gradient(#fff 1px, ${FACE} 1px 2px, ${SHADOW} 2px 3px, #fff 3px 4px, ${FACE} 4px 5px, ${SHADOW} 5px);
`;

const DrawButton = styled.button`
  display: grid;
  place-items: center;
  width: 22px;
  height: 22px;
`;

const RedText = styled.span<{ $small: boolean }>`
  color: #f00;
  font-size: ${({ $small }) => ($small ? 12 : 16)}px;
  font-weight: ${({ $small }) => ($small ? 700 : 400)};
`;

const DrawRule = styled.span`
  width: 19px;
  height: 7px;
  background: linear-gradient(transparent 2px, ${SHADOW} 2px 3px, #fff 3px 4px, transparent 4px);
`;

const Sheets = styled.div`
  flex: 1;
  display: flex;
  flex-direction: column;
  min-width: 0;
`;

const Canvas = styled.div`
  flex: 1;
  position: relative;
  margin-top: 1px;
  background: #000;
  border: solid #716f64;
  border-width: 1px 0 1px 1px;
`;

const Crosshair = styled.svg`
  position: absolute;
  top: 491px;
  left: 302px;
`;

const LayoutTabs = styled.div`
  flex: none;
  display: flex;
  height: 16px;
  padding-left: 1px;
  border-bottom: 1px solid #fff;
`;

const NavButton = styled.button`
  width: 14px;
  border-right: 1px solid ${SHADOW};
  border-bottom: 1px solid ${SHADOW};

  svg {
    display: block;
    margin: auto;
  }
`;

const LayoutTab = styled.button<{ $active?: boolean }>`
  display: flex;
  align-items: center;
  padding: 0 0 0 6px;
  gap: 6px;
  font: 13px/14px 'Liberation Serif', serif;
  ${({ $active }) => $active && css`
    padding: 0 10px;
    background: #000;
    color: #fff;
    font: 12px/14px ${CJK};
    clip-path: polygon(0 0, 100% 0, calc(100% - 6px) 100%, 5px 100%);
  `}
`;

const FileTabs = styled.div`
  flex: none;
  display: flex;
  height: 22px;
  padding-top: 2px;
  border-bottom: 1px solid #fff;
`;

const FileNav = styled.span`
  display: flex;
  width: 37px;
  height: 19px;
  border: 1px solid #000;

  button {
    flex: 1;
  }
`;

const FileTab = styled.button`
  height: 18px;
  padding: 0 2px;
  background: #fff;
  font: 700 11px/18px 'Liberation Sans', sans-serif;
`;

const FileLine = styled.span`
  flex: 1;
  border-top: 1px solid #000;
`;

const CommandPane = styled.div`
  flex: none;
  display: flex;
  height: 92px;
  margin-top: 2px;
  padding: 9px 5px 2px 6px;
  border-top: 2px solid #222;
`;

const TallGrip = styled.span`
  width: 8px;
  margin-right: 3px;
  border: solid ${SHADOW};
  border-width: 0 1px 1px 0;
  background: linear-gradient(90deg, #fff 1px, ${FACE} 1px 3px, ${SHADOW} 3px 4px, #fff 4px 5px, ${FACE} 5px);
`;

const CommandBox = styled.div`
  flex: 1;
  display: flex;
  flex-direction: column;
  border: solid #000;
  border-width: 1px 0 0 1px;
  font: 15px/16px ${CJK};
`;

const History = styled.div`
  flex: 1;
  display: flex;
  background: #fff;
  border-bottom: 1px solid ${SHADOW};
`;

const HistoryText = styled.div`
  flex: 1;
  padding-left: 1px;
`;

const HistoryLine = styled.div`
  display: flex;
  gap: 10px;
  height: 16px;
`;

const Path = styled.span`
  font: 13px/16px ${MONO};
`;

const VScroll = styled.div`
  display: flex;
  flex-direction: column;
  width: 16px;
  background: #f4f3ee;
`;

const ScrollButton = styled.button`
  ${scrollFace}
  min-width: 16px;
  min-height: 16px;
`;

const Prompt = styled.div`
  display: flex;
  align-items: center;
  height: 19px;
  padding-left: 1px;
  background: #fff;
`;

const PromptInput = styled.input`
  flex: 1;
  outline: 0;
`;

const HScroll = styled.div`
  display: flex;
  align-items: center;
  width: 84px;
  height: 19px;
  padding: 0 18px 0 2px;
  background: ${FACE};
`;

const RightPanel = styled.aside`
  flex: none;
  display: flex;
  flex-direction: column;
  width: 94px;
  padding-right: 3px;
  border-left: 1px solid #000;
`;

const RightBody = styled.div`
  flex: 1;
  display: flex;
  border-top: 1px solid #fff;
`;

const RightTools = styled.div`
  width: 19px;
  padding-top: 20px;

  button {
    width: 19px;
  }
`;

const Palette = styled.div`
  flex: 1;
  display: flex;
  flex-direction: column;
  background: #666f8e;
  border-left: 1px solid #888;
`;

const raised = css`
  background: ${FACE};
  border: 1px solid;
  border-color: #fff #000 #000 #fff;
`;

const PaletteTop = styled.button`
  height: 20px;
  margin-bottom: 1px;
  background: #fff;
  border: 1px solid ${NAVY};
  color: #0000a0;
`;

const PaletteHead = styled.button`
  ${raised}
  height: 20px;
`;

const PaletteList = styled.div`
  flex: 1;
  display: flex;
  flex-direction: column;
  padding-top: 3px;
`;

const PaletteLink = styled.button`
  height: 26px;
  color: #fff;
`;

const Category = styled.button`
  ${raised}
  height: 21px;
  border-bottom-width: 2px;
`;

const Footer = styled.div`
  flex: none;
  height: 24px;
  border-top: 1px solid ${SHADOW};
  background: linear-gradient(#fff 1px, #8c897c 1px 2px, #d8d5c6 2px, ${FACE} 8px, ${FACE} 80%, #dcd9c4);
`;

const Bar = styled.footer`
  flex: none;
  display: flex;
  align-items: center;
  height: 30px;
  background: linear-gradient(#1f5fd6, #4a93ea 8%, #2663dd 18%, #2257d5 50%, #2663e3 88%, #1941a5);
  color: #fff;
`;

const Start = styled.button`
  display: flex;
  align-items: center;
  gap: 6px;
  width: 97px;
  height: 30px;
  margin-right: 3px;
  padding-left: 10px;
  border-radius: 0 8px 8px 0;
  background: linear-gradient(#2c7a2c, #60b860 12%, #3c963c 25%, #389038 80%, #246824);
  box-shadow: inset -3px 0 4px #205820;
  font: italic 18px/24px ${CJK};
  text-shadow: 1px 1px 1px #123c12;
`;

const Quick = styled.button`
  display: grid;
  place-items: center;
  width: 42px;
  height: 24px;
  margin-right: 2px;
  background: #2a63e0;
  border: 1px solid #4a84f0;
`;

const SearchBox = styled.div`
  display: flex;
  align-items: center;
  width: 148px;
  height: 25px;
  margin-right: 3px;
  padding: 0 7px 0 4px;
  background: #484848;
  border: 1px solid #6a7fa8;
`;

const SearchInput = styled.input`
  flex: 1;
  min-width: 0;
  padding-left: 4px;

  &::placeholder {
    color: #a0a0a0;
  }
`;

const taskTone = {
  plain: 'linear-gradient(#6aa4fc, #3c82f4 15%, #3478f0)',
  pressed: 'linear-gradient(#123c98, #1c50b8 20%, #1e54c0)',
  alert: 'linear-gradient(#f8a848, #e47c10 15%, #dc7408)',
};

const Task = styled.button<{ $tone?: keyof typeof taskTone }>`
  display: flex;
  align-items: center;
  width: 158px;
  height: 25px;
  margin-right: 2px;
  padding-left: 10px;
  border-radius: 2px;
  background: ${({ $tone = 'plain' }) => taskTone[$tone]};

  svg {
    margin-right: 4px;
  }
`;

const Keyboard = styled.span`
  margin-right: 11px;
`;

const Tray = styled.div`
  display: flex;
  align-items: center;
  gap: 2px;
  height: 30px;
  padding-right: 13px;
  border-left: 1px solid #0c4cb8;
  background: linear-gradient(#0c78d8, #38b0f8 8%, #1290e8 20%, #1088e4 50%, #18a0f4 88%, #0c62b8);
`;

const Expand = styled.button`
  display: grid;
  place-items: center;
  width: 18px;
  height: 18px;
  margin-left: -10px;
  border-radius: 50%;
  background: radial-gradient(#40a0f8, #1060d0);
  box-shadow: 0 0 0 1px #70b8f8;
`;

const Score = styled.span`
  width: 22px;
  margin: 0 11px 0 7px;
  border-radius: 50%;
  background: #1cc466;
  font: 13px/22px 'Liberation Sans', sans-serif;
  text-align: center;
`;

const Clock = styled.time`
  font: 10px/16px ${MONO};
`;
